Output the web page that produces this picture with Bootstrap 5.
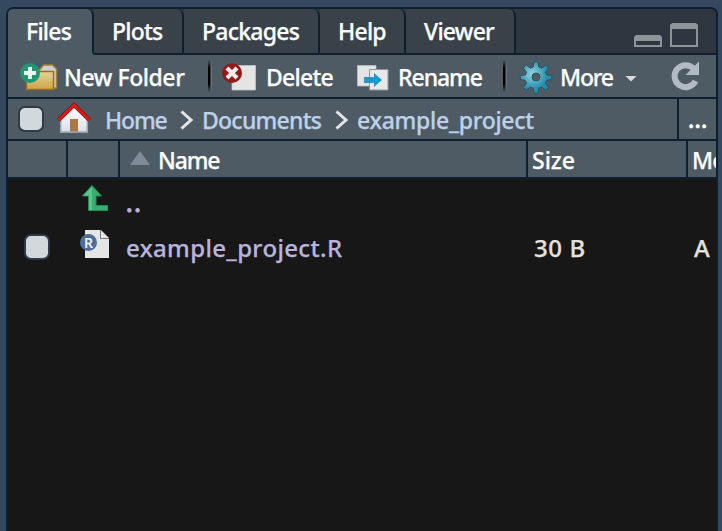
<!DOCTYPE html>
<html lang="en">
<head>
<meta charset="utf-8">
<title>Files</title>
<link href="https://cdn.jsdelivr.net/npm/bootstrap@5.3.0/dist/css/bootstrap.min.css" rel="stylesheet">
<style>
body{background:#344960;font-family:"Noto Sans","Open Sans",sans-serif;font-size:23px;line-height:1;height:531px;overflow:hidden;color:#fff;font-weight:500;-webkit-text-stroke:.25px currentColor}
.pane{margin:7px 4px 0 6px;height:524px;border:2px solid #0e2030;border-bottom:0;border-radius:7px 7px 0 0;background:#171717;overflow:hidden}
.tabs{height:46px;background:#2e373f}
.tab{height:46px;padding-left:18px;border-right:2px solid #0e2030;border-bottom:2px solid #0e2030;background:#394249;border-radius:0 7px 0 0}
.tab.on{background:#4e5b65;border-bottom-color:#4e5b65}
.tabs .rest{border-bottom:2px solid #0e2030}
.bar{background:#4e5b65;border-bottom:2px solid #0e2030}
.tools{height:44px}.path{height:42px}.heads{height:38px}
.path a{color:#bdd1ea;text-decoration:none}
.crumbs{padding-left:10px}
.edge{border-right:2px solid #0e2030}
.vsep{width:4px;height:32px;background:linear-gradient(90deg,#000 0 2px,#6a747c 3px);-webkit-mask:linear-gradient(transparent,#000 25%,#000 75%,transparent);mask:linear-gradient(transparent,#000 25%,#000 75%,transparent)}
.tick{width:26px;height:26px;border:2px solid #2d3b49;border-radius:7px;background:#d3d8dd}
.file{color:#b8b5dd}.val{color:#e6e1dc}
svg{display:block;flex:none}
.t{white-space:pre;flex:none;padding-top:2px;letter-spacing:-.75px}
.tab .t{padding-top:0}
.w84{width:86px}.w88{width:90px}.w134{width:136px}.w108{width:110px}
.s2{width:144px;letter-spacing:-.43px}.s4{width:91px}.s6{width:105px;letter-spacing:-1.05px}.s7{width:37px;padding-left:9px}.s8{width:62px;letter-spacing:-1.2px}
.c1{width:60px}.c2{width:52px}.c3{width:408px}.c4{width:160px}
.p1{width:62px;letter-spacing:-1.15px}.p2{width:120px;letter-spacing:-.75px}.p3{letter-spacing:-.27px}
.nm{letter-spacing:-1.15px}.sz{letter-spacing:0}
.dots{letter-spacing:.2px;-webkit-text-stroke-width:.7px}
.rowh{height:45px;font-size:24px}
.rowh .t{letter-spacing:.35px}
.rowh .up{letter-spacing:1.6px;-webkit-text-stroke-width:1px}
.rowh .val{letter-spacing:.6px}
</style>
</head>
<body>
<main class="pane d-flex flex-column">
<div class="tabs d-flex flex-shrink-0">
<div class="tab on w84 d-flex align-items-center"><span class="t">Files</span></div>
<div class="tab w88 d-flex align-items-center"><span class="t">Plots</span></div>
<div class="tab w134 d-flex align-items-center"><span class="t">Packages</span></div>
<div class="tab w84 d-flex align-items-center"><span class="t">Help</span></div>
<div class="tab w108 d-flex align-items-center"><span class="t">Viewer</span></div>
<div class="rest flex-grow-1 d-flex justify-content-end align-items-end pe-3">
<svg width="68" height="32" viewBox="0 0 68 32" fill="none" stroke="#8a9699" stroke-width="2"><path d="M3 19v6h26v-6"/><path d="M2 20v-4l2-2h24l2 2v4z" fill="#8a9699" stroke="none"/><path d="M39 6v19h26V6"/><path d="M38 8V4l2-2h24l2 2v4z" fill="#8a9699" stroke="none"/></svg>
</div>
</div>
<div class="bar tools d-flex align-items-center flex-shrink-0 ps-2">
<svg width="48" height="38" viewBox="16 57 48 38"><defs><linearGradient id="fo" x2="0" y2="1"><stop stop-color="#e0d69a"/><stop offset="1" stop-color="#d0a348"/></linearGradient><radialGradient id="ge" cx=".38" cy=".38"><stop stop-color="#91d5df"/><stop offset="1" stop-color="#248baa"/></radialGradient></defs>
<path d="M39.500 88V70l4-5h9l4 4v19z" fill="#cfd0cf" stroke="#a18036" stroke-width="1.5"/><path d="M26.500 89.500V71.500H53.500V89.500z" fill="url(#fo)" stroke="#98701b" stroke-width="1.5"/><circle cx="30" cy="73" r="10" fill="#239570"/><path d="M24 73h12M30 67v12" stroke="#edf4f0" stroke-width="4"/></svg>
<span class="t s2">New Folder</span>
<div class="vsep"></div>
<svg width="54" height="38" viewBox="212 57 54 38"><path d="M232 65.500h23.500V90H232z" fill="#e4e4e4" stroke="#c9cccd" stroke-width=".7"/><circle cx="232" cy="73" r="10" fill="#931a19"/><path d="M227 68l10 10M237 68l-10 10" stroke="#f1eded" stroke-width="4.200"/></svg>
<span class="t s4">Delete</span>
<svg width="41" height="38" viewBox="357 57 41 38"><path d="M357.500 65.500H376V86h-18.500z" fill="#e4e4e4" stroke="#bdc1c4" stroke-width=".7"/><path d="M369.500 69.500H388V90h-18.500z" fill="#e8e8e8" stroke="#8e979e" stroke-width="1"/><path d="M364 77h10v-4l8 7-8 7v-4h-10z" fill="#1f99cb"/></svg>
<span class="t s6">Rename</span>
<div class="vsep"></div>
<svg width="53" height="38" viewBox="507 57 53 38"><path fill="url(#ge)" stroke="#285565" fill-rule="evenodd" d="M533.200 67l.8-5h4l.8 5 2.800 1.200 4.100-3.200 3 3-3.200 4.100 1.200 2.900 5 .5v4l-5 .8-1.200 2.900 3.200 4.100-3 3-4.100-3.200-2.800 1.200-.8 5h-4l-.8-5-2.800-1.200-4.100 3.200-3-3 3.200-4.100-1.200-2.900-5-.8v-4l5-.5 1.200-2.900-3.200-4.100 3-3 4.100 3.200zM540 77a4 4 0 1 0-8 0 4 4 0 0 0 8 0z" stroke-linejoin="round"/></svg>
<span class="t s8">More</span>
<svg width="93" height="38" viewBox="622 57 93 38"><path d="M625.500 76h11l-5.500 5.500z" fill="#d8dadc"/><path d="M694 69a11 11 0 1 0 1.500 12" fill="none" stroke="#b4bac5" stroke-width="6"/><path d="M699 61.500V75h-13.500z" fill="#b4bac5"/></svg>
</div>
<div class="bar path d-flex align-items-center flex-shrink-0">
<div class="crumbs d-flex align-items-center flex-grow-1"><div class="tick"></div>
<svg width="61" height="40" viewBox="44 99 61 40"><defs><linearGradient id="ho" x2="0" y2="1"><stop stop-color="#fff"/><stop offset="1" stop-color="#dbdfe6"/></linearGradient></defs><path d="M60 119l14-14 14 14v13.500H60z" fill="url(#ho)"/><path d="M60.700 119v13h26.600v-13" fill="none" stroke="#9aa5ae" stroke-width="1.500"/><path d="M70 119h8v12.500h-8z" fill="#a97846"/><path d="M58.500 120L74 105l15.500 15" fill="none" stroke="#7d0d0b" stroke-width="4"/><path d="M58.500 120L74 105l15.500 15" fill="none" stroke="#e01b15" stroke-width="2.600"/></svg>
<a class="t p1" href="#">Home</a>
<svg width="35" height="38" viewBox="167 101 35 38"><path d="M181.500 112.500l9.500 8.500-9.500 8.500" fill="none" stroke="#e5e7e9" stroke-width="3"/></svg>
<a class="t p2" href="#">Documents</a>
<svg width="35" height="38" viewBox="322 101 35 38"><path d="M336.500 112.500l9.500 8.500-9.500 8.500" fill="none" stroke="#e5e7e9" stroke-width="3"/></svg>
<a class="t p3" href="#">example_project</a></div>
<div class="edge align-self-stretch"></div><div class="s7 flex-shrink-0"><span class="t dots">...</span></div>
</div>
<div class="bar heads d-flex flex-shrink-0 overflow-hidden">
<div class="edge c1 flex-shrink-0"></div><div class="edge c2 flex-shrink-0"></div>
<div class="edge c3 d-flex align-items-center flex-shrink-0"><svg width="38" height="34" viewBox="120 142 38 34"><path d="M130 165l10-14 10 14z" fill="#818b97"/></svg><span class="t nm">Name</span></div>
<div class="edge c4 d-flex align-items-center flex-shrink-0 ps-1"><span class="t sz">Size</span></div>
<div class="d-flex align-items-center flex-shrink-0 ps-1"><span class="t">Modified</span></div>
</div>
<div class="rowh d-flex align-items-center">
<svg width="118" height="45" viewBox="8 179 118 45"><path d="M92 185.500l9.500 10.500h-5.500v9.500h11.500v5H88.500V196h-6z" fill="#3bac70" stroke="#238c54"/><path d="M92 186.500V210h-3v-14.500h-5.500z" fill="#59c68d"/></svg>
<span class="t file up">..</span></div>
<div class="rowh d-flex align-items-center">
<div class="d-flex align-items-center ps-3 flex-shrink-0"><div class="tick"></div><svg width="76" height="44" viewBox="50 225 76 44"><path d="M85 230h16l8 8v20H85z" fill="#e5e5e5"/><path d="M100.500 230v8.500h8.500" fill="none" stroke="#747a80"/><circle cx="88.500" cy="242.500" r="8.500" fill="#4c6f99"/><text x="88.600" y="247.500" font-size="14" font-weight="600" text-anchor="middle" fill="#f0f2f5">R</text></svg></div>
<a class="t file text-decoration-none c3" href="#">example_project.R</a><span class="t val c4">30 B</span><span class="t val">A</span></div>
</main>
<script src="https://cdn.jsdelivr.net/npm/bootstrap@5.3.0/dist/js/bootstrap.bundle.min.js"></script>
</body>
</html>
